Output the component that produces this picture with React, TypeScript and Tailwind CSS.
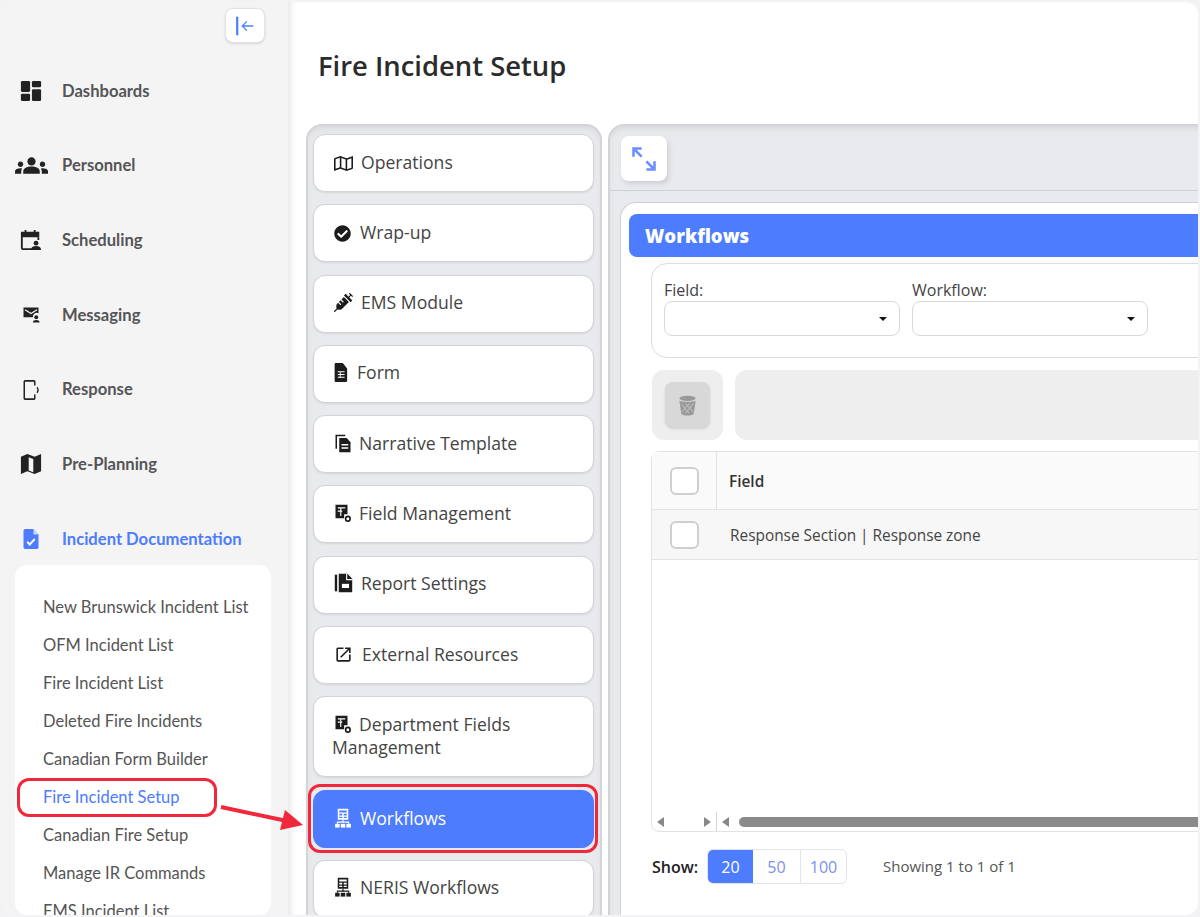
import type { ReactNode } from "react"
import { FaCheckCircle, FaRegMap, FaSyringe } from "react-icons/fa"
import { MdGroups, MdOpenInNew } from "react-icons/md"

const svg = (className: string, children: ReactNode) => (
  <svg viewBox="0 0 24 24" className={className} fill="currentColor" preserveAspectRatio="none">
    {children}
  </svg>
)

const DashIcon = () =>
  svg(
    "h-[22px] w-[22px]",
    <>
      <rect x="1" y="1" width="10" height="12" rx="1.5" />
      <rect x="13" y="1" width="10" height="7" rx="1.5" />
      <rect x="1" y="15" width="10" height="8" rx="1.5" />
      <rect x="13" y="10" width="10" height="13" rx="1.5" />
    </>,
  )

const CalendarIcon = () =>
  svg(
    "h-[22px] w-[22px]",
    <>
      <path d="M5 1h2v3H5zM15 1h2v3h-2z" />
      <path d="M1 3h20v6H3v12h10v2H3a2 2 0 0 1-2-2z" />
      <path d="M19 9h2v3h-2z" />
      <circle cx="17.5" cy="15.5" r="2.6" />
      <path d="M12 23c0-3 2-4.5 5.5-4.5S23 20 23 23z" />
    </>,
  )

const MessageIcon = () =>
  svg(
    "h-[18px] w-[18px]",
    <>
      <path d="M2 2h20v7.5a5 5 0 0 0-7 2.5c-.4 1-.5 2-.4 3H2z" fill="#222" />
      <path d="M4 5l8 5 8-5" fill="none" stroke="#f4f4f5" strokeWidth="1.6" />
      <circle cx="19" cy="15" r="2.6" />
      <path d="M14.5 22c0-2.500 2-3.500 4.500-3.500s4.500 1 4.500 3.500z" />
    </>,
  )

const PhoneIcon = () =>
  svg(
    "h-[22px] w-[18px]",
    <>
      <path d="M4 1h12a2 2 0 0 1 2 2v4h-2V3H4v18h12v-4h2v4a2 2 0 0 1-2 2H4a2 2 0 0 1-2-2V3a2 2 0 0 1 2-2z" />
      <path d="M20 9c1.600 1.700 1.600 4.300 0 6" fill="none" stroke="currentColor" strokeWidth="1.8" />
    </>,
  )

const MapIcon = () =>
  svg(
    "h-[22px] w-[22px]",
    <path d="M1 4l7-3 8 3 7-3v19l-7 3-8-3-7 3zM9.500 4.500v14.500l5 2V6.500z" fillRule="evenodd" />,
  )

const DocCheckIcon = () =>
  svg(
    "h-[22px] w-[20px]",
    <>
      <path d="M5 1h10l6 6v14a2 2 0 0 1-2 2H5a2 2 0 0 1-2-2V3a2 2 0 0 1 2-2z" />
      <path d="M15 1v6h6z" fill="#cfdbff" />
      <path d="M7.500 15l3 3 6-6" fill="none" stroke="#fff" strokeWidth="2.200" />
    </>,
  )

const FormIcon = () =>
  svg(
    "h-[19px] w-[15px]",
    <>
      <path d="M2 0h12l7 7v15a2 2 0 0 1-2 2H3a2 2 0 0 1-2-2V2a2 2 0 0 1 1-2z" />
      <path d="M6 11h11M6 14.500h11M6 18h11M10 11v8" stroke="#fff" strokeWidth="1.400" fill="none" />
    </>,
  )

const NarrativeIcon = () =>
  svg(
    "h-[20px] w-[18px]",
    <>
      <path d="M2 2h13v2H4v15H2z" />
      <path d="M7 6h10l5 5v12H7z" />
      <path d="M10 14h9M10 18h9" stroke="#fff" strokeWidth="1.800" fill="none" />
    </>,
  )

const FieldIcon = () =>
  svg(
    "h-[19px] w-[18px]",
    <>
      <path d="M2 1h16v12h-4.500v5H2z" />
      <path d="M5 5h10M5 9h6M9 5v10" stroke="#fff" strokeWidth="1.500" fill="none" />
      <circle cx="18.500" cy="18.500" r="3" fill="none" stroke="currentColor" strokeWidth="2.200" />
    </>,
  )

const ReportIcon = () =>
  svg(
    "h-[20px] w-[19px]",
    <>
      <path d="M1 2h3v20H1z" />
      <path d="M6 1h11l6 6v16H6z" />
      <path d="M16 1v7h7" fill="none" stroke="#fff" strokeWidth="1.400" />
      <path d="M10 13h9v5h-9z" fill="#fff" />
    </>,
  )

const FlowIcon = () =>
  svg(
    "h-[20px] w-[18px]",
    <>
      <path d="M5 1h14v13H5zM7 3v2.500h10V3zM7 7v2h4V7zM13 7v2h4V7zM7 10.500V12h4v-1.500zM13 10.500V12h4v-1.500z" fillRule="evenodd" />
      <path d="M12 14v4M4.500 19v-2h15v2" stroke="currentColor" strokeWidth="1.500" fill="none" />
      <rect x="1.500" y="19" width="6" height="4.500" />
      <rect x="9" y="19" width="6" height="4.500" />
      <rect x="16.500" y="19" width="6" height="4.500" />
    </>,
  )

const nav = [
  { label: "Dashboards", icon: <DashIcon /> },
  { label: "Personnel", icon: <MdGroups className="h-[33px] w-[33px]" /> },
  { label: "Scheduling", icon: <CalendarIcon /> },
  { label: "Messaging", icon: <MessageIcon /> },
  { label: "Response", icon: <PhoneIcon /> },
  { label: "Pre-Planning", icon: <MapIcon /> },
]

const subItems = [
  "New Brunswick Incident List",
  "OFM Incident List",
  "Fire Incident List",
  "Deleted Fire Incidents",
  "Canadian Form Builder",
  "Fire Incident Setup",
  "Canadian Fire Setup",
  "Manage IR Commands",
  "EMS Incident List",
]

const menu = [
  { label: "Operations", box: "w-[27px]", h: "h-[58px]", icon: <FaRegMap className="h-[17px] w-[19px]" /> },
  { label: "Wrap-up", box: "w-[26px]", h: "h-[58px]", icon: <FaCheckCircle className="h-[17px] w-[17px]" /> },
  { label: "EMS Module", box: "w-[27px]", h: "h-[58px]", icon: <FaSyringe className="h-[19px] w-[19px]" /> },
  { label: "Form", box: "w-[23px]", h: "h-[58px]", icon: <FormIcon /> },
  { label: "Narrative Template", box: "w-[25px]", h: "h-[58px]", icon: <NarrativeIcon /> },
  { label: "Field Management", box: "w-[25px]", h: "h-[58px]", icon: <FieldIcon /> },
  { label: "Report Settings", box: "w-[27px]", h: "h-[58px]", icon: <ReportIcon /> },
  { label: "External Resources", box: "w-[28px]", h: "h-[58px]", icon: <MdOpenInNew className="h-[19px] w-[19px]" /> },
  { label: "Department Fields Management", box: "w-[25px]", h: "h-[81px]", icon: <FieldIcon /> },
  { label: "Workflows", box: "w-[26px]", h: "h-[58px]", icon: <FlowIcon />, active: true },
  { label: "NERIS Workflows", box: "w-[26px]", h: "h-[58px]", icon: <FlowIcon /> },
]

function Checkbox() {
  return <div className="h-[28px] w-[29px] rounded-md border-2 border-[#cfcfcf] bg-white" />
}

function SelectBox() {
  return (
    <div className="relative flex h-[35px] w-[236px] items-center justify-end rounded-lg border border-[#d9d9d9] bg-white pr-[12px]">
      <div className="h-0 w-0 border-x-[4px] border-t-[4px] border-x-transparent border-t-[#111]" />
    </div>
  )
}

function Triangle({ dir }: { dir: "left" | "right" }) {
  return dir === "left" ? (
    <div className="h-0 w-0 border-y-[5px] border-r-[7px] border-y-transparent border-r-[#888]" />
  ) : (
    <div className="h-0 w-0 border-y-[5px] border-l-[7px] border-y-transparent border-l-[#888]" />
  )
}

export default function App() {
  return (
    <div className="relative h-[917px] w-[1200px] overflow-hidden bg-[#f3f3f5] p-[2px] font-['Open_Sans',sans-serif]">
      <div className="flex h-full overflow-hidden rounded-xl">
        {/* sidebar */}
        <aside className="flex w-[286px] shrink-0 flex-col bg-[#f4f4f5] font-['Lato',sans-serif]">
          <div className="flex shrink-0 justify-end pr-[23px] pt-[6px]">
            <button className="flex h-[35px] w-[40px] items-center justify-center rounded-lg border border-[#e3e3e6] bg-white text-[#4d7cfe] shadow-sm">
              <svg viewBox="0 0 24 24" className="h-[22px] w-[22px]" fill="none" stroke="currentColor">
                <path d="M3.500 2v20" strokeWidth="2.400" />
                <path d="M21 12H9M14 7l-5 5 5 5" strokeWidth="1.400" />
              </svg>
            </button>
          </div>
          <div className="mt-[11px] flex shrink-0 flex-col">
            {nav.map((n) => (
              <div key={n.label} className="flex h-[74.6px] items-center text-[#222]">
                <div className="flex w-[58px] shrink-0 justify-center">{n.icon}</div>
                <span className="ml-[2px] text-[16.6px] font-bold text-[#555]">{n.label}</span>
              </div>
            ))}
          </div>
          <div className="mt-[11.4px] flex h-[52px] shrink-0 items-center text-[#4d7cfe]">
            <div className="flex w-[58px] shrink-0 justify-center">
              <DocCheckIcon />
            </div>
            <span className="ml-[2px] text-[16.6px] font-bold">Incident Documentation</span>
          </div>
          <div className="ml-[13px] min-h-0 w-[256px] flex-1 overflow-hidden rounded-xl bg-white pl-[28px] pt-[23px] text-[16.5px] text-[#555]">
            {subItems.map((s) => (
              <div
                key={s}
                className={`flex h-[38px] items-center ${s === "Fire Incident Setup" ? "text-[#4d7cfe]" : ""}`}
              >
                {s}
              </div>
            ))}
          </div>
        </aside>

        {/* main */}
        <main className="min-w-0 flex-1 overflow-hidden border-l border-[#ececee] bg-white shadow-[inset_6px_0_6px_-4px_#e8e8ea]">
          <div className="flex h-[122px] items-center pl-[29px] pt-[6px]">
            <h1 className="text-[27.4px] font-semibold text-[#2b2b2b]">Fire Incident Setup</h1>
          </div>
          <div className="flex h-[793px] gap-[6px] pl-[17px]">
            {/* left menu */}
            <div className="flex w-[296px] shrink-0 flex-col gap-[12.3px] overflow-hidden rounded-t-2xl border-x-2 border-t-2 border-[#d3d4d7] bg-[#e9eaed] pl-[5px] pt-[8px] shadow-[inset_0_4px_6px_-2px_#d5d6d9]">
              {menu.map((m) => (
                <div
                  key={m.label}
                  className={`w-[281px] shrink-0 rounded-xl border px-[18px] text-[17.6px] leading-[23px] ${m.h} ${
                    m.active
                      ? "flex items-center border-[#4d7cfe] bg-[#4d7cfe] text-white"
                      : "border-[#d2d3d6] bg-white text-[#444] shadow-[0_1px_2px_#d5d6d9]"
                  } ${m.label === "Department Fields Management" ? "pt-[16px]" : m.active ? "" : "flex items-center pb-[2px]"}`}
                >
                  <span>
                    <span
                      className={`ml-[2px] inline-flex items-center align-[-3px] ${m.box} ${m.active ? "text-white" : "text-[#1c1c1c]"}`}
                    >
                      {m.icon}
                    </span>
                    {m.label}
                  </span>
                </div>
              ))}
            </div>

            {/* right panel */}
            <div className="flex w-[700px] shrink-0 flex-col rounded-tl-2xl border-l-2 border-t-2 border-[#d3d4d7] bg-[#e9eaed] shadow-[inset_0_4px_6px_-2px_#d5d6d9]">
              <div className="h-[65px] shrink-0 border-b border-[#cfd0d3] pl-[11px] pt-[10px]">
                <button className="flex h-[45px] w-[46px] items-center justify-center rounded-lg bg-white text-[#6b8fff] shadow-[2px_3px_5px_#cfd0d3]">
                  <svg viewBox="0 0 24 24" className="h-[28px] w-[28px]" fill="none" stroke="currentColor" strokeWidth="2.200">
                    <path d="M3 10V3h7M3 3l7 7M21 14v7h-7M21 21l-7-7" />
                  </svg>
                </button>
              </div>
              <div className="flex-1 pl-[10px] pt-[11px]">
                <div className="h-full rounded-tl-2xl border-l border-t border-[#cfd0d3] bg-white pt-[11px]">
                  <div className="ml-[8px] flex h-[43px] items-center rounded-l-lg bg-[#4d7cfe] pl-[16px] text-[18.6px] font-extrabold text-white">
                    Workflows
                  </div>
                  <div className="ml-[30px] mt-[6px] h-[95px] rounded-l-2xl border border-[#dcdcdc] pl-[12px] pt-[15px] text-[16px] leading-[22px] text-[#444]">
                    <div className="flex gap-[12px]">
                      <div>
                        <div>Field:</div>
                        <SelectBox />
                      </div>
                      <div>
                        <div>Workflow:</div>
                        <SelectBox />
                      </div>
                    </div>
                  </div>
                  <div className="ml-[31px] mt-[12px] flex h-[70px] gap-[12px]">
                    <div className="flex w-[71px] items-center justify-center rounded-xl bg-[#eeeeee]">
                      <div className="flex h-[46px] w-[45px] items-center justify-center rounded-lg bg-[#d8d8d8] shadow-sm">
                        <svg viewBox="0 0 24 24" className="h-[23px] w-[23px]" fill="#999">
                          <ellipse cx="12" cy="4.500" rx="8.500" ry="2.800" />
                          <path d="M3.500 7c2 1.600 15 1.600 17 0l-2 13.500c-.4 2.500-12.600 2.500-13 0z" />
                          <path
                            d="M6 11l8 9M10 10l8 9M14 10l-8 9M18 10l-8 10"
                            stroke="#c9c9c9"
                            strokeWidth="1"
                          />
                        </svg>
                      </div>
                    </div>
                    <div className="flex-1 rounded-l-xl bg-[#eeeeee]" />
                  </div>

                  <div className="ml-[30px] mt-[11px] flex h-[381px] flex-col rounded-l-lg border border-[#e3e3e3]">
                    <div className="flex h-[58px] shrink-0 border-b border-[#e3e3e3] bg-[#fafafa]">
                      <div className="flex w-[65px] items-center justify-center border-r border-[#e3e3e3]">
                        <Checkbox />
                      </div>
                      <div className="flex items-center pl-[12px] pt-[2px] text-[15.4px] font-semibold text-[#333]">
                        Field
                      </div>
                    </div>
                    <div className="flex h-[50px] shrink-0 border-b border-[#e0e2e6] bg-[#f7f7f7] pt-[1px]">
                      <div className="flex w-[65px] items-center justify-center">
                        <Checkbox />
                      </div>
                      <div className="flex items-center pl-[13px] pt-[2px] text-[15.4px] text-[#444]">
                        Response Section | Response zone
                      </div>
                    </div>
                    <div className="flex-1" />
                    <div className="flex h-[19px] shrink-0 items-center">
                      <div className="flex h-full w-[65px] items-center justify-between border-r border-[#d5d5d5] px-[5px]">
                        <Triangle dir="left" />
                        <Triangle dir="right" />
                      </div>
                      <div className="ml-[5px]">
                        <Triangle dir="left" />
                      </div>
                      <div className="ml-[10px] h-[10px] flex-1 rounded-l-full bg-[#8a8a8a]" />
                    </div>
                  </div>

                  <div className="ml-[31px] mt-[17px] flex h-[35px] items-center text-[16px]">
                    <span className="w-[55px] font-semibold text-[#222]">Show:</span>
                    <div className="flex h-full w-[140px] overflow-hidden rounded-md border border-[#e3e5ea] text-[#7e8ff0]">
                      <div className="flex w-[45px] items-center justify-center bg-[#4d7cfe] text-white">20</div>
                      <div className="flex w-[48px] items-center justify-center border-r border-[#e3e5ea]">50</div>
                      <div className="flex flex-1 items-center justify-center">100</div>
                    </div>
                    <span className="ml-[36px] text-[15px] text-[#555]">Showing 1 to 1 of 1</span>
                  </div>
                </div>
              </div>
            </div>
          </div>
        </main>
      </div>

      {/* red annotations */}
      <div className="absolute left-[17px] top-[778px] h-[39px] w-[200px] rounded-xl border-[3px] border-[#f0283c]" />
      <div className="absolute left-[308px] top-[784px] h-[69px] w-[290px] rounded-xl border-[3px] border-[#f0283c]" />
      <svg className="absolute left-[215px] top-[800px] h-[35px] w-[95px]" viewBox="0 0 95 35">
        <path d="M6 7L72 21" stroke="#f0283c" strokeWidth="4" />
        <path d="M70 10L88 25L65 30z" fill="#f0283c" />
      </svg>
    </div>
  )
}
